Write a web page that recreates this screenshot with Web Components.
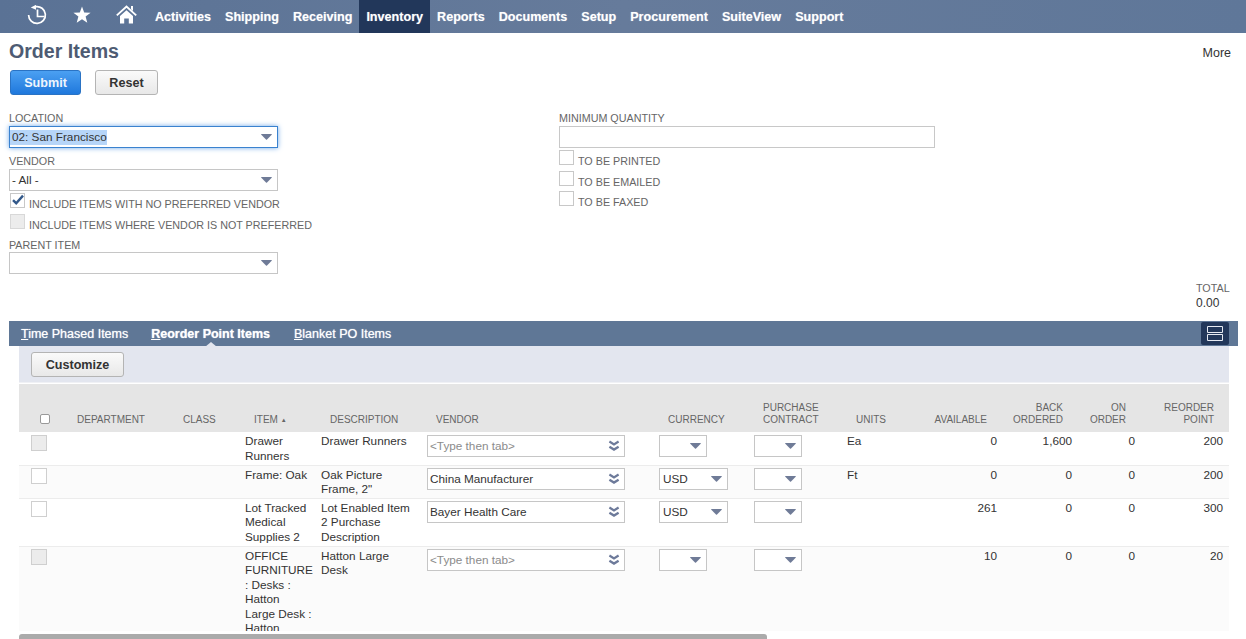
<!DOCTYPE html>
<html>
<head>
<meta charset="utf-8">
<title>Order Items</title>
<style>
html, body { margin: 0; background: #fff; }
body { font-family: "Liberation Sans", Arial, sans-serif; height: 639px; overflow: hidden; }
</style>
</head>
<body>
<ns-nav active="Inventory"></ns-nav>
<ns-head title="Order Items"></ns-head>
<ns-form></ns-form>
<ns-total></ns-total>
<ns-sublist></ns-sublist>

<script>
customElements.define('ns-button', class extends HTMLElement {
  connectedCallback() {
    this.attachShadow({ mode: 'open' });
    this.shadowRoot.innerHTML = `
    <style>
      :host { display: inline-flex; box-sizing: border-box; height: 25px; align-items: center; justify-content: center;
        border: 1px solid #b4b4b4; border-radius: 3px; background: linear-gradient(#fafafa, #e8e8e8);
        font: bold 12.6px "Liberation Sans", Arial, sans-serif; color: #333; }
      :host([primary]) { border-color: #2a73c4; background: linear-gradient(#4ba0f2, #1f78dc); color: #eef5fd; }
    </style>
    <slot></slot>`;
  }
});

customElements.define('ns-select', class extends HTMLElement {
  connectedCallback() {
    let value = this.getAttribute('value') || '';
    let placeholder = this.getAttribute('placeholder');
    let double = this.hasAttribute('double');
    let arrow = double
      ? `<svg width="12" height="12" viewBox="0 0 12 12"><path d="M1.4 1.6 L6 4.4 L10.6 1.6 M1.4 6.8 L6 9.6 L10.6 6.8" fill="none" stroke="#6d7a9a" stroke-width="2.3"/></svg>`
      : `<svg width="11" height="6" viewBox="0 0 11 6"><path d="M.6 0 H10.4 Q11.2 0 10.7 .7 L6 5.6 Q5.5 6 5 5.6 L.3 .7 Q-.2 0 .6 0Z" fill="#6f7b97"/></svg>`;
    this.attachShadow({ mode: 'open' });
    this.shadowRoot.innerHTML = `
    <style>
      :host { display: flex; box-sizing: border-box; height: 22px; align-items: center; justify-content: space-between;
        border: 1px solid #c6c6c6; background: #fff; padding: 0 3px 0 2px;
        font: 11.75px "Liberation Sans", Arial, sans-serif; color: #333; }
      :host([focused]) { border-color: #3a82cf; box-shadow: 0 0 5px #6fa8e8; }
      :host([focused]) .v { background: #b6d5f8; margin-left: -2px; padding-left: 2px; }
      :host([double]) svg { margin-right: 1px; }
      .v { white-space: nowrap; padding-bottom: var(--text-lift, 2px); }
      .p { color: #8b8b8b; }
      svg { flex: none; margin-right: 2px; }
    </style>
    <span class="v ${placeholder ? 'p' : ''}">${(placeholder || value).replace('<', '&lt;')}</span>${arrow}`;
  }
});

customElements.define('ns-check', class extends HTMLElement {
  connectedCallback() {
    this.attachShadow({ mode: 'open' });
    this.shadowRoot.innerHTML = `
    <style>
      :host { display: flex; align-items: flex-start; height: 18px;
        font: 10.75px/14px "Liberation Sans", Arial, sans-serif; color: #666; }
      .box { box-sizing: border-box; width: 15px; height: 15px; flex: none; border: 1px solid #c8c8c8; background: #fff; margin-right: 4px; position: relative; }
      :host([disabled]) .box { background: #ececec; border-color: #d8d8d8; }
      svg { position: absolute; left: 1px; top: 0; }
      span { margin-top: 4px; white-space: nowrap; }
    </style>
    <div class="box">${this.hasAttribute('checked') ? '<svg width="12" height="12" viewBox="0 0 12 12"><path d="M1 6.2 L4.2 9.2 L11 1.6" fill="none" stroke="#33598a" stroke-width="2.4"/></svg>' : ''}</div>
    <span><slot></slot></span>`;
  }
});

customElements.define('ns-field', class extends HTMLElement {
  connectedCallback() {
    this.attachShadow({ mode: 'open' });
    this.shadowRoot.innerHTML = `
    <style>
      :host { display: block; }
      label { display: block; font: 10.75px/13px "Liberation Sans", Arial, sans-serif; color: #666; white-space: nowrap; padding-bottom: var(--label-gap, 1px); }
    </style>
    <label>${this.getAttribute('label')}</label>
    <slot></slot>`;
  }
});

customElements.define('ns-nav', class extends HTMLElement {
  connectedCallback() {
    let items = ['Activities', 'Shipping', 'Receiving', 'Inventory', 'Reports', 'Documents', 'Setup', 'Procurement', 'SuiteView', 'Support'];
    let active = this.getAttribute('active');
    this.attachShadow({ mode: 'open' });
    this.shadowRoot.innerHTML = `
    <style>
      :host { display: flex; height: 33px; align-items: stretch; background: linear-gradient(90deg, #5a7295, #667b9b 50%, #5f7799);
        font: bold 12.6px "Liberation Sans", Arial, sans-serif; color: #fff; text-shadow: 0 0 1px rgba(255,255,255,.5); }
      .icons { display: flex; align-items: center; padding: 0 0 4px 27px; width: 148px; box-sizing: border-box; }
      .items { display: flex; }
      a { display: flex; align-items: center; padding: 0 7px; white-space: nowrap; }
      a.on { background: #22375a; }
      svg { flex: none; display: block; }
    </style>
    <div class="icons">
      <svg width="20" height="20" viewBox="0 0 20 20"><path d="M8.6 1.7 A8.4 8.4 0 1 1 1.6 10" fill="none" stroke="#fff" stroke-width="1.7"/><path d="M3.8 2.4 L9 -.2 L9 4.8Z" fill="#fff"/><path d="M11 4.5 V11.5 H18" fill="none" stroke="#fff" stroke-width="1.7" transform="translate(-.5 0)"/></svg>
      <svg width="18" height="18" viewBox="0 0 18 18" style="margin-left:26px"><path d="M9 .5 L11.2 6.4 L17.6 6.7 L12.6 10.6 L14.3 16.8 L9 13.3 L3.7 16.8 L5.4 10.6 L.4 6.7 L6.8 6.4Z" fill="#fff"/></svg>
      <svg width="21" height="20" viewBox="0 0 21 20" style="margin-left:25px"><path d="M.8 10.4 L10.5 1.6 L20.2 10.4" fill="none" stroke="#fff" stroke-width="1.9"/><path d="M15 1 H17 V6 L15 4.2Z" fill="#fff"/><path d="M4 11 L10.5 5.2 L17 11 V18.6 H12.8 V13.6 H8.2 V18.6 H4Z" fill="#fff"/></svg>
    </div>
    <div class="items">${items.map(i => `<a class="${i == active ? 'on' : ''}">${i}</a>`).join('')}</div>`;
  }
});

customElements.define('ns-head', class extends HTMLElement {
  connectedCallback() {
    this.attachShadow({ mode: 'open' });
    this.shadowRoot.innerHTML = `
    <style>
      :host { display: block; padding: 6px 15px 0 9px; font-family: "Liberation Sans", Arial, sans-serif; }
      .top { display: flex; justify-content: space-between; align-items: center; height: 24px; }
      h1 { margin: 0; font-size: 19.6px; line-height: 24px; font-weight: bold; color: #4e5b73; }
      .more { font-size: 12.5px; color: #333; padding-top: 4px; }
      .btns { display: flex; margin: 7px 0 0 1px; gap: 14px; }
      .s { width: 71px; }
      .r { width: 63px; }
    </style>
    <div class="top"><h1>${this.getAttribute('title')}</h1><span class="more">More</span></div>
    <div class="btns"><ns-button class="s" primary>Submit</ns-button><ns-button class="r">Reset</ns-button></div>`;
  }
});

customElements.define('ns-form', class extends HTMLElement {
  connectedCallback() {
    this.attachShadow({ mode: 'open' });
    this.shadowRoot.innerHTML = `
    <style>
      :host { display: grid; grid-template-columns: 550px 376px; height: 180px; box-sizing: border-box; padding: 17px 0 0 9px; }
      .left ns-select { width: 269px; }
      .left ns-field + ns-field { margin-top: 7px; }
      .checks { display: flex; flex-direction: column; gap: 3px; }
      .left .checks { margin-top: 2px; margin-left: 1px; }
      .left .checks + ns-field { margin-top: 7px; --label-gap: 0px; }
      .right .checks { margin-top: 2px; }
      .right ns-check:last-child { margin-top: -1px; }
    </style>
    <div class="left">
      <ns-field label="LOCATION"><ns-select value="02: San Francisco" focused></ns-select></ns-field>
      <ns-field label="VENDOR"><ns-select value="- All -"></ns-select></ns-field>
      <div class="checks">
        <ns-check checked>INCLUDE ITEMS WITH NO PREFERRED VENDOR</ns-check>
        <ns-check disabled>INCLUDE ITEMS WHERE VENDOR IS NOT PREFERRED</ns-check>
      </div>
      <ns-field label="PARENT ITEM"><ns-select></ns-select></ns-field>
    </div>
    <div class="right">
      <ns-field label="MINIMUM QUANTITY"><ns-input></ns-input></ns-field>
      <div class="checks">
        <ns-check>TO BE PRINTED</ns-check>
        <ns-check>TO BE EMAILED</ns-check>
        <ns-check>TO BE FAXED</ns-check>
      </div>
    </div>`;
  }
});

customElements.define('ns-input', class extends HTMLElement {
  connectedCallback() {
    this.attachShadow({ mode: 'open' });
    this.shadowRoot.innerHTML = `<style>:host { display: block; box-sizing: border-box; height: 22px; border: 1px solid #c8c8c8; background: #fff; }</style>`;
  }
});

customElements.define('ns-total', class extends HTMLElement {
  connectedCallback() {
    this.attachShadow({ mode: 'open' });
    this.shadowRoot.innerHTML = `
    <style>
      :host { display: block; box-sizing: border-box; height: 46px; padding: 6px 0 0 1196px; font: 10.75px/14px "Liberation Sans", Arial, sans-serif; color: #666; }
      b { display: block; font-weight: normal; font-size: 12px; line-height: 16px; color: #333; }
    </style>
    TOTAL<b>0.00</b>`;
  }
});

customElements.define('ns-tabs', class extends HTMLElement {
  connectedCallback() {
    this.attachShadow({ mode: 'open' });
    this.shadowRoot.innerHTML = `
    <style>
      :host { display: flex; height: 25px; align-items: center; background: #5f7796; margin: 0 8px 0 9px; padding-left: 12px;
        position: relative; font: 12.5px "Liberation Sans", Arial, sans-serif; color: #fff; text-shadow: 0 0 1px rgba(255,255,255,.8); }
      span { white-space: nowrap; margin-right: 23px; position: relative; }
      span.on { font-weight: bold; margin-right: 24px; }
      span.on::after { content: ""; position: absolute; left: 50%; margin-left: -6px; bottom: -6px; border: 6px solid transparent; border-top: 0; border-bottom: 5px solid #e3e6ef; }
      .toggle { margin-left: auto; margin-right: 9px; width: 28px; height: 23px; background: #22375a; border-radius: 2px; display: flex; align-items: center; justify-content: center; }
    </style>
    <span><u>T</u>ime Phased Items</span><span class="on"><u>R</u>eorder Point Items</span><span><u>B</u>lanket PO Items</span>
    <div class="toggle"><svg width="16" height="15" viewBox="0 0 16 15"><path d="M.5 .5 H15.5 V6.5 H.5Z M.5 8.5 H15.5 V14.5 H.5Z" fill="none" stroke="#e6eaf2" stroke-width="1"/></svg></div>`;
  }
});

customElements.define('ns-sublist', class extends HTMLElement {
  connectedCallback() {
    let head = ['<i class="hc"></i>', 'DEPARTMENT', 'CLASS', 'ITEM <em>▲</em>', 'DESCRIPTION', 'VENDOR', 'CURRENCY', 'PURCHASE<br>CONTRACT',
      'UNITS', 'AVAILABLE', 'BACK<br>ORDERED', 'ON<br>ORDER', 'REORDER<br>POINT'];
    let rows = [
      { box: true, item: 'Drawer<br>Runners', desc: 'Drawer Runners', vendor: '', cur: '', unit: 'Ea', n: ['0', '1,600', '0', '200'], h: 33 },
      { item: 'Frame: Oak', desc: 'Oak Picture<br>Frame, 2"', vendor: 'China Manufacturer', cur: 'USD', unit: 'Ft', n: ['0', '0', '0', '200'], h: 33 },
      { item: 'Lot Tracked<br>Medical<br>Supplies 2', desc: 'Lot Enabled Item<br>2 Purchase<br>Description', vendor: 'Bayer Health Care', cur: 'USD', unit: '', n: ['261', '0', '0', '300'], h: 48 },
      { box: true, item: 'OFFICE<br>FURNITURE<br>: Desks :<br>Hatton<br>Large Desk :<br>Hatton', desc: 'Hatton Large<br>Desk', vendor: '', cur: '', unit: '', n: ['10', '0', '0', '20'], h: 85 }
    ];
    let body = rows.map(r => `
      <tr style="height:${r.h}px">
        <td><i class="cb ${r.box ? 'dis' : ''}"></i></td><td></td><td></td>
        <td class="t"><div style="max-height:${r.h - 2}px">${r.item}</div></td>
        <td class="t"><div>${r.desc}</div></td>
        <td><ns-select class="ven" double ${r.vendor ? `value="${r.vendor}"` : 'placeholder="<Type then tab>"'}></ns-select></td>
        <td><ns-select class="${r.cur ? 'cur' : 'cur0'}" value="${r.cur}"></ns-select></td>
        <td><ns-select class="cur0"></ns-select></td>
        <td class="t">${r.unit}</td>
        ${r.n.map(x => `<td class="t num">${x}</td>`).join('')}
      </tr>`).join('');
    this.attachShadow({ mode: 'open' });
    this.shadowRoot.innerHTML = `
    <style>
      :host { display: block; font: 11.75px "Liberation Sans", Arial, sans-serif; color: #333; }
      .wrap { margin: 0 17px 0 19px; position: relative; }
      .bar { display: flex; align-items: flex-start; height: 37px; box-sizing: border-box; padding: 6px 0 0 12px; background: #e3e6ef; border-bottom: 1px solid #f0f1f5; }
      ns-button { width: 93px; }
      .scroll { height: 247px; overflow: hidden; position: relative; margin-top: 1px; }
      table { border-collapse: collapse; table-layout: fixed; width: 1210px; }
      th { background: #e5e5e5; height: 42px; vertical-align: bottom; padding: 0 0 6px 9px; text-align: left; font-weight: normal; font-size: 10px; line-height: 12px; color: #666; }
      th em { font-style: normal; font-size: 6px; vertical-align: 1px; }
      th.d { padding-left: 7px; }
      th.r { text-align: right; padding-right: 12px; padding-left: 0; }
      th.r.a { padding-right: 13px; }
      th.r.z { padding-right: 15px; }
      th.c { text-align: center; padding: 0 0 6px 0; }
      td { vertical-align: top; padding: 2px 0 0 0; line-height: 14.5px; border-bottom: 1px solid #ececec; --text-lift: 0px; }
      tr:first-child td { --text-lift: 2px; }
      tr:first-child td:not(.t) { padding-top: 3px; }
      tr:nth-child(even) td { background: #fbfbfb; }
      td.t div { overflow: hidden; white-space: nowrap; }
      td.num { text-align: right; padding-right: 3px; }
      td:last-child.num { padding-right: 6px; }
      .hc { display: inline-block; box-sizing: border-box; width: 10px; height: 10px; border: 1px solid #999; background: #fff; border-radius: 2px; vertical-align: -1px; }
      .cb { display: block; box-sizing: border-box; width: 16px; height: 16px; margin-left: 12px; border: 1px solid #cfcfcf; background: #fff; }
      .cb.dis { background: #ececec; }
      .ven { width: 198px; }
      .cur { width: 69px; padding-left: 3px; }
      .cur0 { width: 48px; }
      .thumb { position: absolute; left: 0; right: 462px; bottom: 0; height: 5px; background: #ababab; border-radius: 3px 3px 0 0; }
      .hbar { height: 8px; position: relative; }
    </style>
    <ns-tabs></ns-tabs>
    <div class="wrap">
      <div class="bar"><ns-button>Customize</ns-button></div>
      <div class="scroll">
        <table>
          <colgroup>
            <col style="width:51px"><col style="width:106px"><col style="width:69px"><col style="width:76px"><col style="width:106px"><col style="width:232px"><col style="width:95px"><col style="width:93px"><col style="width:62px"><col style="width:91px"><col style="width:75px"><col style="width:63px"><col style="width:91px">
          </colgroup>
          <thead><tr>${head.map((h, i) => {
            let cls = i == 0 ? 'c' : (i < 3 ? 'd' : (i == 9 ? 'r a' : (i == 12 ? 'r z' : (i > 9 ? 'r' : ''))));
            return `<th class="${cls}">${h}</th>`;
          }).join('')}</tr></thead>
          <tbody>${body}</tbody>
        </table>
      </div>
      <div class="hbar"><div class="thumb"></div></div>
    </div>`;
  }
});
</script>
</body>
</html>
